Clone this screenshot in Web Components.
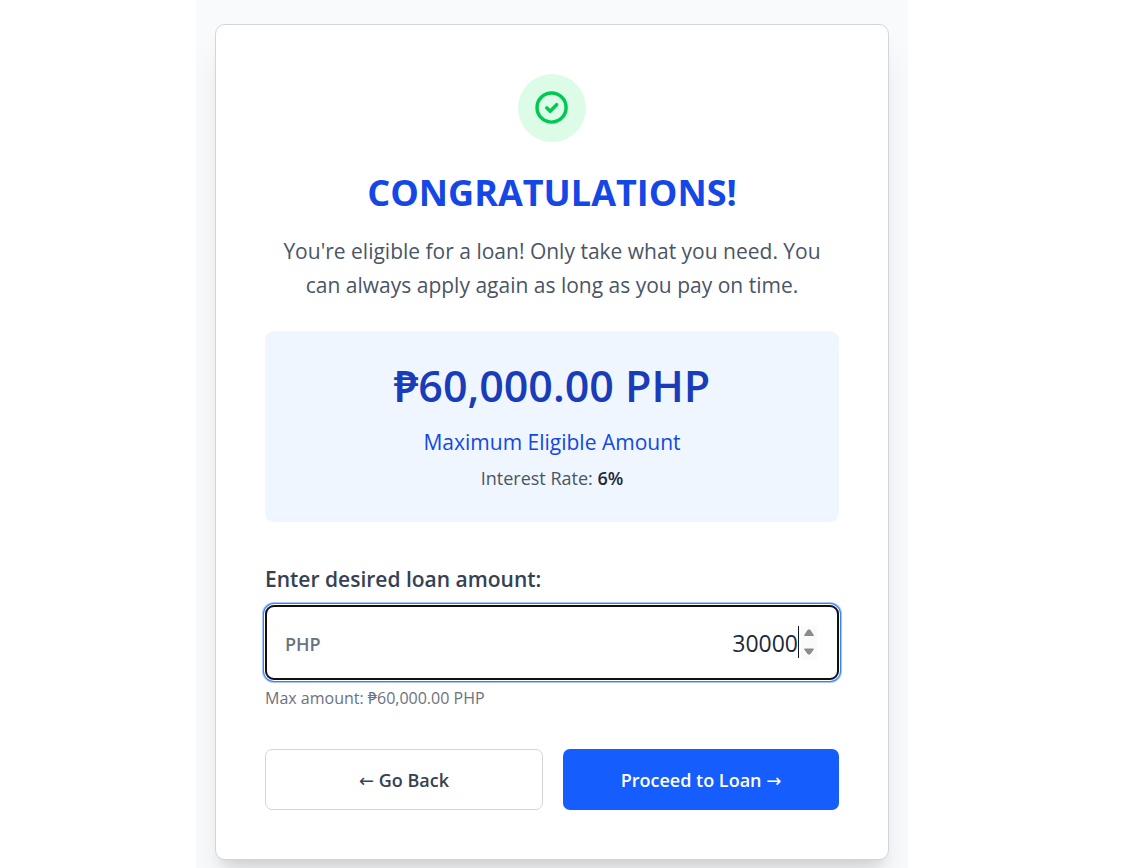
<!DOCTYPE html>
<html lang="en">
<head>
<meta charset="utf-8">
<title>Loan offer</title>
<style>
body { margin: 0; background: #fff; font-family: "Open Sans", "Noto Sans", sans-serif; color: #364153; }
</style>
</head>
<body>
<loan-page>
  <loan-card>
    <success-badge></success-badge>
    <offer-intro>
      <span slot="title">CONGRATULATIONS!</span>
      You're eligible for a loan! Only take what you need. You can always apply again as long as you pay on time.
    </offer-intro>
    <offer-summary amount="₱60,000.00 PHP" rate="6%"></offer-summary>
    <amount-field value="30000" max="60000">Max amount: ₱60,000.00 PHP</amount-field>
    <loan-actions></loan-actions>
  </loan-card>
</loan-page>
<script>
class BaseElement extends HTMLElement {
  constructor() {
    super();
    this.attachShadow({ mode: "open" }).innerHTML = this.constructor.markup;
  }
}

customElements.define("loan-page", class extends BaseElement {
  static markup = `<style>
    :host { display: grid; grid-template-columns: 196fr 712fr 223fr; min-height: 100vh; }
    main { grid-column: 2; background: #f9fafb; padding: 24px 19px 8px; overflow: hidden; }
  </style><main><slot></slot></main>`;
});

customElements.define("loan-card", class extends BaseElement {
  static markup = `<style>
    :host { display: flex; flex-direction: column; background: #fff; border: 1px solid #d1d5dc;
      border-radius: 10px; padding: 49px; box-shadow: 0 25px 31px -6px #0000001a, 0 10px 12px -7px #0000001a; }
  </style><slot></slot>`;
});

customElements.define("success-badge", class extends BaseElement {
  static markup = `<style>
    :host { display: flex; align-items: center; justify-content: center; align-self: center;
      width: 68px; height: 68px; border-radius: 50%; background: #dcfce7; margin-bottom: 27px; }
    svg { display: block; width: 36px; height: 36px; }
  </style>
  <svg viewBox="0 0 24 24" fill="none" stroke="#00c951" stroke-width="2.3" stroke-linecap="round" stroke-linejoin="round" aria-hidden="true">
    <path d="M8.500 11.900l2.300 2.300 4.300-4.400"/><circle cx="11.700" cy="11.700" r="9.700"/>
  </svg>`;
});

customElements.define("offer-intro", class extends BaseElement {
  static markup = `<style>
    :host { display: block; text-align: center; margin-bottom: 29px; }
    h1 { margin: 0 0 17px; font-size: 36px; line-height: 48px; font-weight: 700; color: #1447e6; }
    p { margin: 0; font-size: 21px; line-height: 34px; color: #4a5565; }
  </style><h1><slot name="title"></slot></h1><p><slot></slot></p>`;
});

customElements.define("offer-summary", class extends BaseElement {
  static markup = `<style>
    :host { display: block; text-align: center; background: #eff6ff; border-radius: 9px; padding: 28px; margin-bottom: 40px; }
    p { margin: 0; }
    .amount { font-size: 43px; line-height: 54px; font-weight: 600; color: #193cb8; margin-bottom: 12px; }
    .caption { font-size: 21px; line-height: 34px; color: #1447e6; margin-bottom: 4px; }
    .rate { font-size: 18px; line-height: 31px; color: #4a5565; }
    strong { font-weight: 600; color: #1e2939; }
  </style>
  <p class="amount"></p><p class="caption">Maximum Eligible Amount</p>
  <p class="rate">Interest Rate: <strong></strong></p>`;
  connectedCallback() {
    this.shadowRoot.querySelector(".amount").textContent = this.getAttribute("amount");
    this.shadowRoot.querySelector("strong").textContent = this.getAttribute("rate");
  }
});

customElements.define("amount-field", class extends BaseElement {
  static markup = `<style>
    :host { display: block; margin-bottom: 38px; }
    label { display: block; font-size: 21px; line-height: 34px; font-weight: 600; color: #364153; margin-bottom: 9px; }
    .box { display: flex; align-items: center; height: 75px; box-sizing: border-box; padding: 0 20px 0 18px;
      border: 2px solid #101010; border-radius: 9px;
      box-shadow: 0 0 0 1px #fff, 0 0 0 2px #3b82f6, 0 0 0 3px #a3c5fb; }
    .unit { font-size: 18px; font-weight: 600; color: #6a7282; padding-top: 2px; }
    input { flex: 1; min-width: 0; height: 34px; border: 0; padding: 0; outline: 0; background: none;
      text-align: right; font: 400 23px "Open Sans", "Noto Sans", sans-serif; color: #1e2939; caret-color: transparent; }
    input::-webkit-inner-spin-button { appearance: none; opacity: 1; width: 19px; height: 34px; margin: 0;
      background: url("data:image/svg+xml,%3Csvg xmlns='http://www.w3.org/2000/svg' width='19' height='34'%3E%3Cpath fill='%23fafafa' d='M3 0h16v34H3z'/%3E%3Cpath fill='%23101828' d='M0 0h1v32H0z'/%3E%3Cpath fill='%238b8b8b' stroke='%238b8b8b' stroke-linejoin='round' d='M6.500 9.500L10 4h2l3.500 5.500zM6.500 23h9L12 28h-2z'/%3E%3C/svg%3E") no-repeat; }
    p { margin: 5px 0 0; font-size: 16px; line-height: 26px; color: #6a7282; }
  </style>
  <label for="amount">Enter desired loan amount:</label>
  <div class="box"><span class="unit">PHP</span><input id="amount" type="number" aria-describedby="hint"></div>
  <p id="hint"><slot></slot></p>`;
  connectedCallback() {
    const input = this.shadowRoot.querySelector("input");
    input.max = this.getAttribute("max");
    input.value = this.getAttribute("value");
  }
});

customElements.define("loan-actions", class extends BaseElement {
  static markup = `<style>
    :host { display: grid; grid-template-columns: 278fr 276fr; gap: 20px; }
    button { height: 61px; margin: 0; padding: 0 16px; border: 0; border-radius: 7px; cursor: pointer;
      font: 600 18px "Open Sans", "Noto Sans", sans-serif; }
    .back { background: #fff; border: 1px solid #d1d5dc; color: #364153; }
    .next { background: #155dfc; color: #fff; }
    .arrow { font-family: "DejaVu Sans", sans-serif; font-weight: 400; line-height: 1; }
  </style>
  <button class="back" type="button"><span class="arrow">←</span> Go Back</button>
  <button class="next" type="button">Proceed to Loan <span class="arrow">→</span></button>`;
});
</script>
</body>
</html>
